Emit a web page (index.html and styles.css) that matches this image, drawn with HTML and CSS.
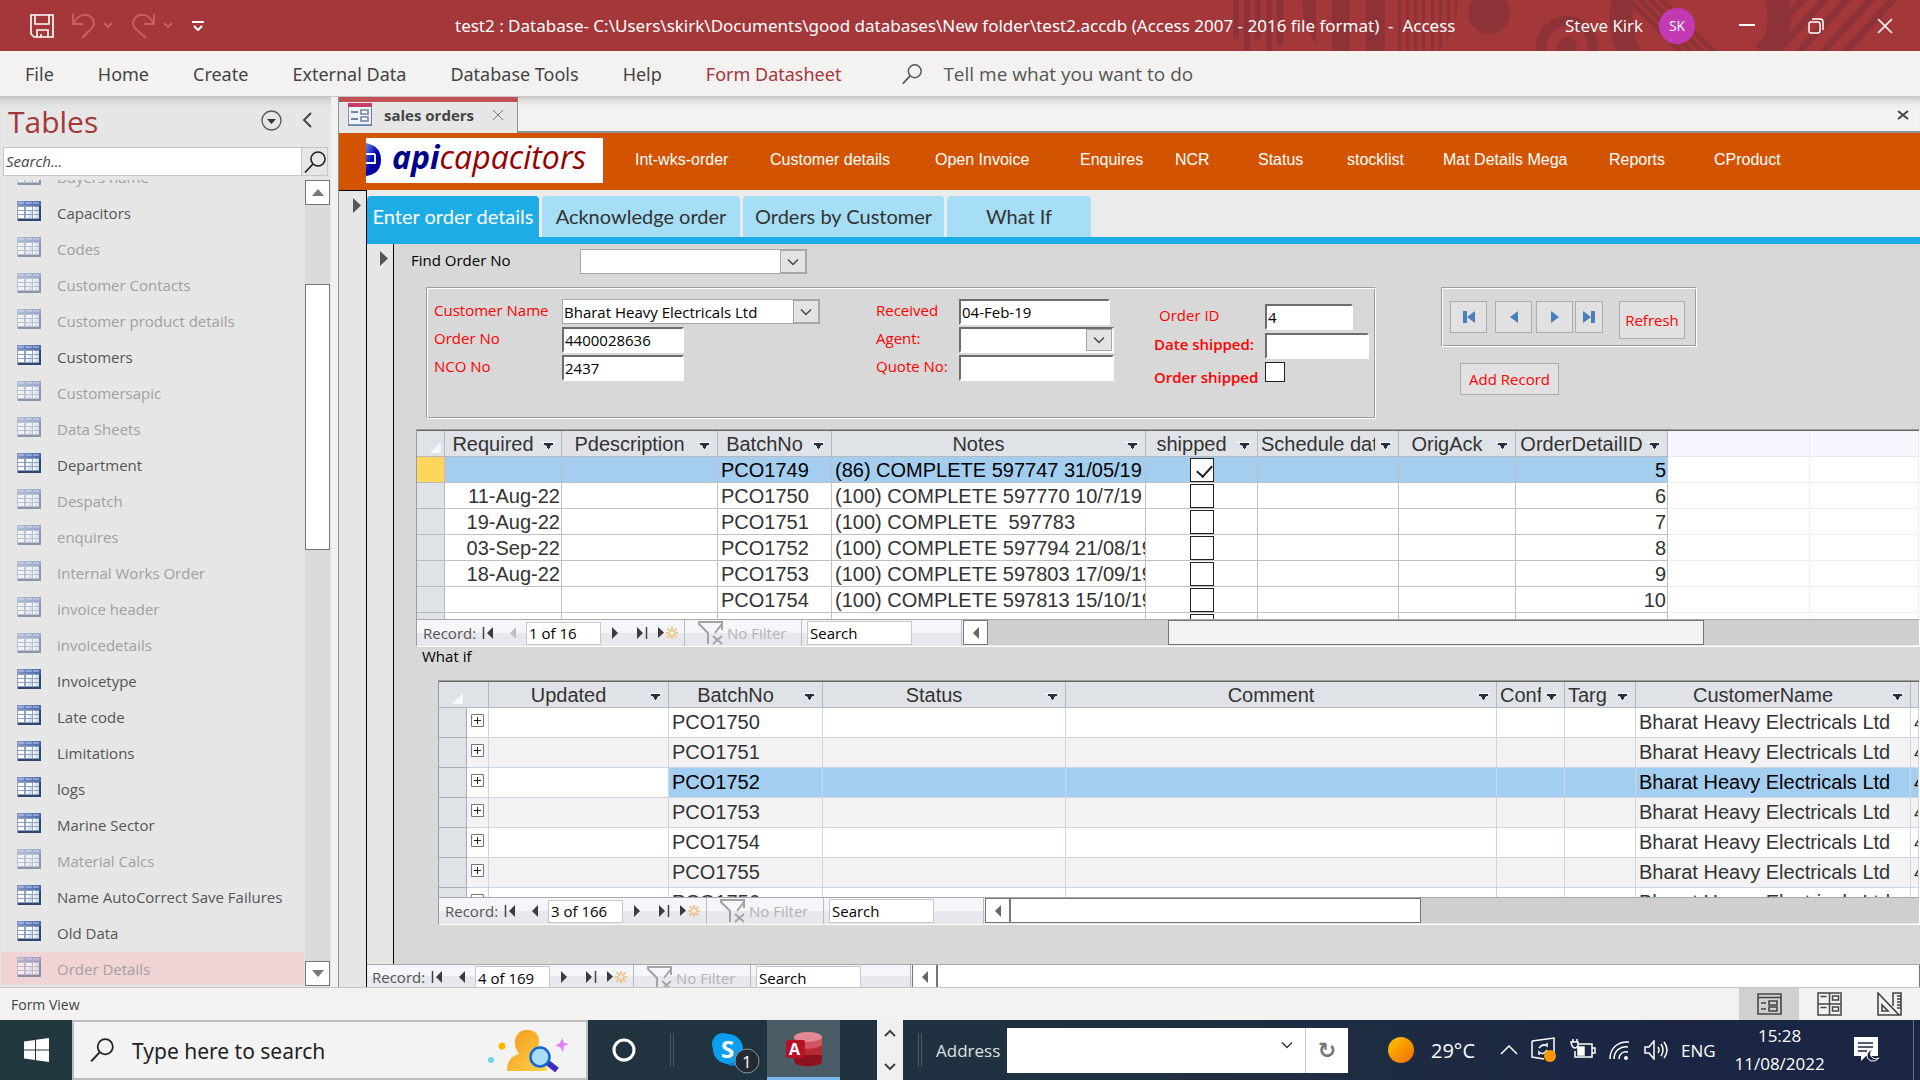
FILE: index.html
```html
<!DOCTYPE html>
<html lang="en">
<head>
<meta charset="utf-8">
<title>test2 : Database - Access</title>
<link rel="stylesheet" href="styles.css">
</head>
<body>
<svg class="defs" aria-hidden="true">
  <defs>
    <linearGradient id="head" x1="0" x2="1"><stop offset="0" stop-color="#7f98c8"/><stop offset="1" stop-color="#4a67a8"/></linearGradient>
    <linearGradient id="sunfill" x1="0" y1="0" x2="1" y2="1"><stop offset="0" stop-color="#ffc400"/><stop offset="1" stop-color="#f06a00"/></linearGradient>
    <linearGradient id="gold" x1="0" x2="1" y2="1"><stop offset="0" stop-color="#f39a1c"/><stop offset="1" stop-color="#ffd24a"/></linearGradient>
    <linearGradient id="globe" x1="0" x2="1" y2="1"><stop offset="0" stop-color="#5b8fe8"/><stop offset=".5" stop-color="#0000b0"/><stop offset="1" stop-color="#00007a"/></linearGradient>
  </defs>
  <symbol id="i-table" viewBox="0 0 24 20">
    <rect width="24" height="20" fill="#8f9fbe"/><rect width="24" height="5" fill="url(#head)"/>
    <path d="M1 2h6M9 2h6M16 2h6" stroke="#c3d0ea"/>
    <path d="M1 6h6v3h-6zM9 6h6v3h-6zM16 6h6v3h-6zM1 10h6v3h-6zM9 10h6v3h-6zM16 10h6v3h-6zM1 14h6v3h-6zM9 14h6v3h-6zM16 14h6v3h-6z" fill="#fff"/>
    <path d="M18 6h4v3h-4zM12 10h3v3h-3zM18 10h4v3h-4zM11 14h4v3h-4zM18 14h4v3h-4z" fill="#d3e0fb"/>
    <path d="M1 19h22V5" fill="none" stroke="#2f486c" stroke-width="2"/>
  </symbol>
  <symbol id="i-search" viewBox="0 0 24 24"><circle cx="15" cy="9" r="7" fill="none" stroke="currentColor" stroke-width="1.6"/><path d="M10 14L2 22.500" stroke="currentColor" stroke-width="1.8"/></symbol>
  <symbol id="i-down" viewBox="0 0 12 8"><path d="M1 1.500l5 5 5-5" fill="none" stroke="currentColor" stroke-width="1.400"/></symbol>
  <symbol id="i-drop" viewBox="0 0 14 8"><path d="M0 .5h14" stroke="#fff"/><path d="M3 1h9v2h-2v1h-1v2h-1v1h-1v-1h-1v-2h-1v-1h-2z" fill="#23303f"/></symbol>
  <symbol id="i-first" viewBox="0 0 12 12"><path d="M1.500 0v12" stroke="#444" stroke-width="1.500"/><path d="M11 0v12L5 6z" fill="#3c3c3c"/></symbol>
  <symbol id="i-prev" viewBox="0 0 12 12"><path d="M9 0v12L3 6z" fill="currentColor"/></symbol>
  <symbol id="i-next" viewBox="0 0 12 12"><path d="M3 0v12L9 6z" fill="currentColor"/></symbol>
  <symbol id="i-last" viewBox="0 0 12 12"><path d="M10.500 0v12" stroke="#444" stroke-width="1.500"/><path d="M1 0v12L7 6z" fill="#3c3c3c"/></symbol>
  <symbol id="i-new" viewBox="0 0 20 12"><path d="M0 0v11l6-5.500z" fill="#3c3c3c"/><path d="M14 0v12M8 6h12M9.500 1.500l9 9M18.500 1.500l-9 9" stroke="#eebd72" stroke-width="1.700"/><circle cx="14" cy="6" r="2" fill="#f3f3f5"/></symbol>
  <symbol id="i-filter" viewBox="0 0 26 24"><path d="M24 9V1H1v2l9 9v11M24 3l-7 9" fill="none" stroke="#a3a3a3" stroke-width="2"/><path d="M15 15l9 8M24 15l-9 8" stroke="#a3a3a3" stroke-width="1.800"/></symbol>
  <symbol id="i-corner" viewBox="0 0 12 12"><path d="M12 0v12H0z" fill="#f4f9fe"/><path d="M12 0v12" stroke="#a9c6e6"/></symbol>
  <symbol id="i-plus" viewBox="0 0 13 13"><path d="M.5 .5h12v12h-12z" fill="#fff" stroke="#777"/><path d="M3 6.500h7M6.500 3v7" stroke="#222"/></symbol>
</svg>

<header class="titlebar">
  <svg class="art" viewBox="0 0 690 51" width="690" height="51" aria-hidden="true">
    <g fill="#8d3337">
      <path d="M3 0h6v39h-6zM14 0h6v50h-6zM25 0h6v39h-6zM36 0h6v51h-6zM47 0h6v45h-6z"/>
      <clipPath id="disc"><circle cx="150" cy="0" r="78"/></clipPath>
      <path clip-path="url(#disc)" d="M70 0h16v51h-16zM102 0h18v51h-18zM136 0h19v51h-19zM168 0h3v51h-3zM176 0h3v51h-3zM184 0h3v51h-3zM192 0h3v51h-3zM201 0h3v51h-3zM209 0h3v51h-3zM217 0h3v51h-3zM225 0h3v51h-3z"/>
      <circle cx="259" cy="13" r="21"/><circle cx="337" cy="47" r="10"/>
    </g>
    <g fill="none" stroke="#8d3337">
      <circle cx="337" cy="47" r="26" stroke-width="10"/>
      <circle cx="470" cy="17" r="79" stroke-width="23"/>
      <path stroke-width="5" d="M402 -8L476 66M413 -8L487 66M424 -8L498 66M391 -8L465 66"/>
      <path stroke-width="7" d="M528 48L578 -6M550 48L600 -6M566 55L622 -6M590 55L646 -6M612 55L668 -6"/>
    </g>
  </svg>
  <div class="quick">
    <button aria-label="Save"><svg width="24" height="24" viewBox="0 0 24 24" fill="none" stroke="#fff" stroke-width="1.600"><path d="M1 1h22v22H4l-3-3zM5 1v9h14V1M7 23v-7h11v7M11 23v-3"/></svg></button>
    <button aria-label="Undo" class="dim"><svg width="42" height="26" viewBox="0 0 42 26" fill="none" stroke="currentColor" stroke-width="1.800"><path d="M1 1v10h10M1 11C6 1 14 0 19 4c5 5 3 10-1 13l-8 8M32 10l4 4 4-4"/></svg></button>
    <button aria-label="Redo" class="dim"><svg width="42" height="26" viewBox="0 0 42 26" fill="none" stroke="currentColor" stroke-width="1.800"><path d="M22 1v10H12M22 11C17 1 9 0 4 4c-5 5-3 10 1 13l9 8M32 10l4 4 4-4"/></svg></button>
    <button aria-label="Customize toolbar"><svg width="12" height="10" viewBox="0 0 12 10" fill="none" stroke="#fff" stroke-width="2"><path d="M0 1h12M2 5l4 4 4-4"/></svg></button>
  </div>
  <h1>test2 : Database- C:\Users\skirk\Documents\good databases\New folder\test2.accdb (Access 2007 - 2016 file format)  -  Access</h1>
  <div class="account"><span>Steve Kirk</span><span class="avatar">SK</span></div>
  <div class="winbtns">
    <button aria-label="Minimize"><svg width="16" height="16" viewBox="0 0 16 16"><path d="M0 7h16" stroke="#fff" stroke-width="2"/></svg></button>
    <button aria-label="Restore"><svg width="16" height="16" viewBox="0 0 16 16" fill="none" stroke="#fff" stroke-width="1.500"><rect x="1" y="4" width="11" height="11" rx="2"/><path d="M4 1h8q3 0 3 3v8"/></svg></button>
    <button aria-label="Close"><svg width="16" height="16" viewBox="0 0 16 16"><path d="M1 1l14 14M15 1L1 15" stroke="#fff" stroke-width="1.600"/></svg></button>
  </div>
</header>

<nav class="ribbon">
  <a href="#">File</a><a href="#">Home</a><a href="#">Create</a><a href="#">External Data</a><a href="#">Database Tools</a><a href="#">Help</a><a href="#" class="on">Form Datasheet</a>
  <label class="tell"><svg width="22" height="24"><use href="#i-search"/></svg><span>Tell me what you want to do</span></label>
</nav>

<div class="work">
  <aside class="side">
    <div class="sidehead"><h2>Tables</h2>
      <button aria-label="Object type"><svg width="21" height="21" viewBox="0 0 21 21"><circle cx="10.500" cy="10.500" r="9.500" fill="none" stroke="#555" stroke-width="1.300"/><path d="M6 9h9l-4.500 5z" fill="#333"/></svg></button>
      <button aria-label="Collapse"><svg width="10" height="16" viewBox="0 0 10 16"><path d="M9 1L2 8l7 7" fill="none" stroke="#444" stroke-width="2"/></svg></button>
    </div>
    <div class="sidesearch"><input type="text" aria-label="Search tables" placeholder="Search..."><button aria-label="Search"><svg width="24" height="24"><use href="#i-search"/></svg></button></div>
    <div class="listwrap">
      <ul class="tables">
        <li class="off"><svg><use href="#i-table"/></svg>Buyers name</li>
        <li><svg><use href="#i-table"/></svg>Capacitors</li>
        <li class="off"><svg><use href="#i-table"/></svg>Codes</li>
        <li class="off"><svg><use href="#i-table"/></svg>Customer Contacts</li>
        <li class="off"><svg><use href="#i-table"/></svg>Customer product details</li>
        <li><svg><use href="#i-table"/></svg>Customers</li>
        <li class="off"><svg><use href="#i-table"/></svg>Customersapic</li>
        <li class="off"><svg><use href="#i-table"/></svg>Data Sheets</li>
        <li><svg><use href="#i-table"/></svg>Department</li>
        <li class="off"><svg><use href="#i-table"/></svg>Despatch</li>
        <li class="off"><svg><use href="#i-table"/></svg>enquires</li>
        <li class="off"><svg><use href="#i-table"/></svg>Internal Works Order</li>
        <li class="off"><svg><use href="#i-table"/></svg>invoice header</li>
        <li class="off"><svg><use href="#i-table"/></svg>invoicedetails</li>
        <li><svg><use href="#i-table"/></svg>Invoicetype</li>
        <li><svg><use href="#i-table"/></svg>Late code</li>
        <li><svg><use href="#i-table"/></svg>Limitations</li>
        <li><svg><use href="#i-table"/></svg>logs</li>
        <li><svg><use href="#i-table"/></svg>Marine Sector</li>
        <li class="off"><svg><use href="#i-table"/></svg>Material Calcs</li>
        <li><svg><use href="#i-table"/></svg>Name AutoCorrect Save Failures</li>
        <li><svg><use href="#i-table"/></svg>Old Data</li>
        <li class="off sel"><svg><use href="#i-table"/></svg>Order Details</li>
      </ul>
      <div class="vscroll">
        <button aria-label="Scroll up"><svg width="12" height="7" viewBox="0 0 12 7"><path d="M0 7h12L6 0z" fill="#777"/></svg></button>
        <div class="vthumb"></div>
        <button aria-label="Scroll down"><svg width="12" height="7" viewBox="0 0 12 7"><path d="M0 0h12L6 7z" fill="#777"/></svg></button>
      </div>
    </div>
  </aside>

  <main class="doc">
    <div class="doctabs">
      <div class="doctab"><svg width="24" height="23" viewBox="0 0 24 23"><rect x=".5" y=".5" width="23" height="22" fill="#eef2fa" stroke="#8792ab"/><rect width="24" height="4" fill="#c6406a"/><path d="M3 9h7M3 16h7" stroke="#7c8397" stroke-width="2"/><path d="M13 7h7v4h-7zM13 14h7v4h-7z" fill="#fff" stroke="#7580a0" stroke-width="1.600"/><path d="M0 22h24V5" fill="none" stroke="#5c79ad" stroke-width="1.500"/></svg><strong>sales orders</strong><button aria-label="Close tab"><svg width="12" height="12" viewBox="0 0 12 12"><path d="M1 1l10 10M11 1L1 11" stroke="#777"/></svg></button></div>
      <button class="closeall" aria-label="Close object"><svg width="12" height="10" viewBox="0 0 12 10"><path d="M1 1l10 8M11 1L1 9" stroke="#444" stroke-width="2"/></svg></button>
    </div>

    <header class="brand">
      <div class="logo">
        <svg width="17" height="36" viewBox="0 0 17 36"><path d="M0 1Q15 4 15 18T0 34z" fill="url(#globe)"/><path d="M0 12h9M0 21h9V12" stroke="#fff" stroke-width="1.800" fill="none"/></svg>
        <span class="api">api</span><span class="cap">capacitors</span>
      </div>
      <nav class="links"><a href="#">Int-wks-order</a><a href="#">Customer details</a><a href="#">Open Invoice</a><a href="#">Enquires</a><a href="#">NCR</a><a href="#">Status</a><a href="#">stocklist</a><a href="#">Mat Details Mega</a><a href="#">Reports</a><a href="#">CProduct</a></nav>
    </header>

    <div class="record">
      <div class="selector"><svg width="8" height="15" viewBox="0 0 8 15"><path d="M0 0l8 7.500L0 15z" fill="#555"/></svg></div>
      <div class="inner">
        <div class="tabs">
          <button class="t1 on">Enter order details</button><button class="t2">Acknowledge order</button><button class="t3">Orders by Customer</button><button class="t4">What If</button>
        </div>
        <div class="subrecord">
          <div class="selector"><svg width="8" height="15" viewBox="0 0 8 15"><path d="M0 0l8 7.500L0 15z" fill="#555"/></svg></div>
          <form class="form">
            <div class="find"><label for="find">Find Order No</label><div class="combo w-find"><select id="find"><option></option></select><span><svg width="12" height="8"><use href="#i-down"/></svg></span></div></div>

            <div class="top">
              <fieldset class="etched details">
                <div class="fields f1">
                  <label for="cust">Customer Name</label><div class="combo w-cust"><select id="cust"><option>Bharat Heavy Electricals Ltd</option></select><span><svg width="12" height="8"><use href="#i-down"/></svg></span></div>
                  <label for="ono">Order No</label><input class="sunk w122" id="ono" type="text" value="4400028636">
                  <label for="nco">NCO No</label><input class="sunk w122" id="nco" type="text" value="2437">
                </div>
                <div class="fields f2">
                  <label for="rec">Received</label><input class="sunk w151" id="rec" type="text" value="04-Feb-19">
                  <label for="agent">Agent:</label><div class="combo sunk w155"><select id="agent"><option></option></select><span><svg width="12" height="8"><use href="#i-down"/></svg></span></div>
                  <label for="quote">Quote No:</label><input class="sunk w155" id="quote" type="text">
                </div>
                <div class="fields f3">
                  <label class="indent" for="oid">Order ID</label><input class="sunk w88" id="oid" type="text" value="4">
                  <label class="heavy" for="dship">Date shipped:</label><input class="sunk w104" id="dship" type="text">
                  <label class="heavy low" for="oship">Order shipped</label><input class="tick" id="oship" type="checkbox">
                </div>
              </fieldset>
              <div class="tools">
                <div class="etched navbox">
                  <button type="button" aria-label="First record"><svg width="12" height="12" viewBox="0 0 12 12"><path d="M0 0h4v12H0zM12 0v12L4 6z" fill="#4a7fb8"/></svg></button>
                  <button type="button" aria-label="Previous record"><svg width="12" height="12" viewBox="0 0 12 12"><path d="M10 0v12L2 6z" fill="#4a7fb8"/></svg></button>
                  <button type="button" aria-label="Next record"><svg width="12" height="12" viewBox="0 0 12 12"><path d="M2 0v12l8-6z" fill="#4a7fb8"/></svg></button>
                  <button type="button" class="narrow" aria-label="Last record"><svg width="12" height="12" viewBox="0 0 12 12"><path d="M12 0h-4v12h4zM0 0v12l8-6z" fill="#4a7fb8"/></svg></button>
                  <button type="button" class="refresh">Refresh</button>
                </div>
                <button type="button" class="add">Add Record</button>
              </div>
            </div>

            <section class="sheet s1">
              <div class="view v1">
                <table class="grid g1">
                  <colgroup><col class="c-sel"><col class="c-req"><col class="c-desc"><col class="c-batch"><col class="c-notes"><col class="c-ship"><col class="c-sched"><col class="c-ack"><col class="c-id"><col class="c-gap"><col></colgroup>
                  <thead><tr><th class="rs"><svg class="corner"><use href="#i-corner"/></svg></th><th><div><span>Required</span><svg><use href="#i-drop"/></svg></div></th><th><div><span>Pdescription</span><svg><use href="#i-drop"/></svg></div></th><th><div><span>BatchNo</span><svg><use href="#i-drop"/></svg></div></th><th><div><span>Notes</span><svg><use href="#i-drop"/></svg></div></th><th><div><span>shipped</span><svg><use href="#i-drop"/></svg></div></th><th><div><span>Schedule dat</span><svg><use href="#i-drop"/></svg></div></th><th><div><span>OrigAck</span><svg><use href="#i-drop"/></svg></div></th><th><div><span>OrderDetailID</span><svg><use href="#i-drop"/></svg></div></th><th class="void"></th><th class="void"></th></tr></thead>
                  <tbody>
                    <tr class="cur"><td class="rs now"></td><td class="r"></td><td></td><td>PCO1749</td><td>(86) COMPLETE 597747 31/05/19</td><td class="c"><input class="tick" type="checkbox" aria-label="shipped" checked></td><td></td><td></td><td class="r">5</td><td class="void"></td><td class="void"></td></tr>
                    <tr><td class="rs"></td><td class="r">11-Aug-22</td><td></td><td>PCO1750</td><td>(100) COMPLETE 597770 10/7/19</td><td class="c"><input class="tick" type="checkbox" aria-label="shipped"></td><td></td><td></td><td class="r">6</td><td class="void"></td><td class="void"></td></tr>
                    <tr><td class="rs"></td><td class="r">19-Aug-22</td><td></td><td>PCO1751</td><td>(100) COMPLETE  597783</td><td class="c"><input class="tick" type="checkbox" aria-label="shipped"></td><td></td><td></td><td class="r">7</td><td class="void"></td><td class="void"></td></tr>
                    <tr><td class="rs"></td><td class="r">03-Sep-22</td><td></td><td>PCO1752</td><td>(100) COMPLETE 597794 21/08/19</td><td class="c"><input class="tick" type="checkbox" aria-label="shipped"></td><td></td><td></td><td class="r">8</td><td class="void"></td><td class="void"></td></tr>
                    <tr><td class="rs"></td><td class="r">18-Aug-22</td><td></td><td>PCO1753</td><td>(100) COMPLETE 597803 17/09/19</td><td class="c"><input class="tick" type="checkbox" aria-label="shipped"></td><td></td><td></td><td class="r">9</td><td class="void"></td><td class="void"></td></tr>
                    <tr><td class="rs"></td><td class="r"></td><td></td><td>PCO1754</td><td>(100) COMPLETE 597813 15/10/19</td><td class="c"><input class="tick" type="checkbox" aria-label="shipped"></td><td></td><td></td><td class="r">10</td><td class="void"></td><td class="void"></td></tr>
                    <tr><td class="rs"></td><td></td><td></td><td></td><td></td><td class="c"><input class="tick" type="checkbox" aria-label="shipped"></td><td></td><td></td><td></td><td class="void"></td><td class="void"></td></tr>
                  </tbody>
                </table>
              </div>
              <div class="recnav">
                <span class="lab">Record:</span><button type="button" aria-label="First"><svg><use href="#i-first"/></svg></button><button type="button" class="faint" aria-label="Previous"><svg><use href="#i-prev"/></svg></button><input class="pos" type="text" aria-label="Record position" value="1 of 16"><button type="button" class="nx" aria-label="Next"><svg><use href="#i-next"/></svg></button><button type="button" aria-label="Last"><svg><use href="#i-last"/></svg></button><button type="button" class="new" aria-label="New"><svg><use href="#i-new"/></svg></button><span class="filter"><svg><use href="#i-filter"/></svg>No Filter</span><input class="find-in" type="text" aria-label="Search records" value="Search"><span class="pad"></span>
                <div class="hscroll mid"><button type="button" aria-label="Scroll left"><svg><use href="#i-prev"/></svg></button><div class="hthumb"></div></div>
              </div>
            </section>

            <p class="whatif">What if</p>

            <section class="sheet s2">
              <div class="view v2">
                <table class="grid g2">
                  <colgroup><col class="c-sel"><col class="c-exp"><col class="c-upd"><col class="c-batch2"><col class="c-stat"><col class="c-com"><col class="c-conf"><col class="c-targ"><col class="c-cname"><col></colgroup>
                  <thead><tr><th class="rs" colspan="2"><svg class="corner"><use href="#i-corner"/></svg></th><th><div><span>Updated</span><svg><use href="#i-drop"/></svg></div></th><th><div><span>BatchNo</span><svg><use href="#i-drop"/></svg></div></th><th><div><span>Status</span><svg><use href="#i-drop"/></svg></div></th><th><div><span>Comment</span><svg><use href="#i-drop"/></svg></div></th><th><div><span>Conf</span><svg><use href="#i-drop"/></svg></div></th><th><div><span>Targ</span><svg><use href="#i-drop"/></svg></div></th><th><div><span>CustomerName</span><svg><use href="#i-drop"/></svg></div></th><th></th></tr></thead>
                  <tbody>
                    <tr><td class="rs"></td><td class="x"><svg><use href="#i-plus"/></svg></td><td></td><td>PCO1750</td><td></td><td></td><td></td><td></td><td>Bharat Heavy Electricals Ltd</td><td>4400028636</td></tr>
                    <tr><td class="rs"></td><td class="x"><svg><use href="#i-plus"/></svg></td><td></td><td>PCO1751</td><td></td><td></td><td></td><td></td><td>Bharat Heavy Electricals Ltd</td><td>4400028636</td></tr>
                    <tr class="cur"><td class="rs"></td><td class="x"><svg><use href="#i-plus"/></svg></td><td class="plain"></td><td>PCO1752</td><td></td><td></td><td></td><td></td><td>Bharat Heavy Electricals Ltd</td><td>4400028636</td></tr>
                    <tr><td class="rs"></td><td class="x"><svg><use href="#i-plus"/></svg></td><td></td><td>PCO1753</td><td></td><td></td><td></td><td></td><td>Bharat Heavy Electricals Ltd</td><td>4400028636</td></tr>
                    <tr><td class="rs"></td><td class="x"><svg><use href="#i-plus"/></svg></td><td></td><td>PCO1754</td><td></td><td></td><td></td><td></td><td>Bharat Heavy Electricals Ltd</td><td>4400028636</td></tr>
                    <tr><td class="rs"></td><td class="x"><svg><use href="#i-plus"/></svg></td><td></td><td>PCO1755</td><td></td><td></td><td></td><td></td><td>Bharat Heavy Electricals Ltd</td><td>4400028636</td></tr>
                    <tr><td class="rs"></td><td class="x"><svg><use href="#i-plus"/></svg></td><td></td><td>PCO1756</td><td></td><td></td><td></td><td></td><td>Bharat Heavy Electricals Ltd</td><td>4400028636</td></tr>
                  </tbody>
                </table>
              </div>
              <div class="recnav">
                <span class="lab">Record:</span><button type="button" aria-label="First"><svg><use href="#i-first"/></svg></button><button type="button" aria-label="Previous"><svg><use href="#i-prev"/></svg></button><input class="pos" type="text" aria-label="Record position" value="3 of 166"><button type="button" class="nx" aria-label="Next"><svg><use href="#i-next"/></svg></button><button type="button" aria-label="Last"><svg><use href="#i-last"/></svg></button><button type="button" class="new" aria-label="New"><svg><use href="#i-new"/></svg></button><span class="filter"><svg><use href="#i-filter"/></svg>No Filter</span><input class="find-in" type="text" aria-label="Search records" value="Search"><span class="pad"></span>
                <div class="hscroll short"><button type="button" aria-label="Scroll left"><svg><use href="#i-prev"/></svg></button><div class="hthumb"></div></div>
              </div>
            </section>
          </form>
        </div>
        <div class="recnav outer">
          <span class="lab">Record:</span><button type="button" aria-label="First"><svg><use href="#i-first"/></svg></button><button type="button" aria-label="Previous"><svg><use href="#i-prev"/></svg></button><input class="pos" type="text" aria-label="Record position" value="4 of 169"><button type="button" class="nx" aria-label="Next"><svg><use href="#i-next"/></svg></button><button type="button" aria-label="Last"><svg><use href="#i-last"/></svg></button><button type="button" class="new" aria-label="New"><svg><use href="#i-new"/></svg></button><span class="filter"><svg><use href="#i-filter"/></svg>No Filter</span><input class="find-in" type="text" aria-label="Search records" value="Search"><span class="pad"></span>
          <div class="hscroll full"><button type="button" aria-label="Scroll left"><svg><use href="#i-prev"/></svg></button><div class="hthumb"></div></div>
        </div>
      </div>
    </div>
  </main>
</div>

<footer class="status"><span>Form View</span>
  <button class="on" aria-label="Form view"><svg width="25" height="22" viewBox="0 0 25 22" fill="none" stroke="#444" stroke-width="1.600"><path d="M1 1h23v20H1zM1 4.500h23M4 10h5M4 16h5M12 8h8v4h-8zM12 14h8v4h-8z"/></svg></button>
  <button aria-label="Layout view"><svg width="25" height="24" viewBox="0 0 25 24" fill="none" stroke="#444" stroke-width="1.500"><path d="M1 1h23v22H1zM12.500 1v22M1 12h23M3.500 4.500h6M3.500 15.500h6M15.500 4h6v4h-6zM15.500 15h6v4h-6z"/></svg></button>
  <button aria-label="Design view"><svg width="25" height="24" viewBox="0 0 25 24" fill="none" stroke="#444" stroke-width="1.600"><path d="M1 1v22h21zM5 13v6h6zM16 14V1h8v22h-3M20 4h4M20 7h4M20 10h4M20 13h4M20 16h4"/></svg></button>
</footer>

<footer class="taskbar">
  <button class="start" aria-label="Start"><svg width="25" height="24" viewBox="0 0 25 24" fill="#fff"><path d="M0 3.500L11 2v9.500H0zM12 1.800L25 0v11.500H12zM0 12.500h11V22L0 20.500zM12 12.500h13V24l-13-1.800z"/></svg></button>
  <label class="search"><svg width="26" height="26"><use href="#i-search"/></svg><span>Type here to search</span>
    <svg class="person" width="82" height="44" viewBox="0 0 82 44"><circle cx="15" cy="18" r="3.500" fill="#ffb400"/><circle cx="4" cy="32" r="3" fill="#6ad4e8"/><path d="M20 43q0-14 12-17c-10-14 0-26 10-24 14 2 11 16 6 24q12 3 12 17z" fill="url(#gold)"/><path d="M61 35l9 7" stroke="#3a2fc0" stroke-width="6"/><circle cx="53" cy="29" r="9.500" fill="#a8ddf8" stroke="#1565d8" stroke-width="2.500"/><path d="M75 10l2 5 5 1-5 2-1 6-3-5-5-1 5-3z" fill="#e080f8"/></svg>
  </label>
  <button class="cortana" aria-label="Cortana"><svg width="24" height="24" viewBox="0 0 24 24"><circle cx="12" cy="12" r="10" fill="none" stroke="#fff" stroke-width="3"/></svg></button>
  <span class="bar"></span>
  <button class="skype" aria-label="Skype"><svg width="50" height="48" viewBox="0 0 50 48"><circle cx="12" cy="18" r="11" fill="#0a9be8"/><circle cx="22" cy="29" r="11" fill="#0877d6"/><circle cx="17" cy="23" r="15" fill="#0ba0ef"/><circle cx="36" cy="35" r="12" fill="#222b33" stroke="#8c959c"/></svg><b>S</b><i>1</i></button>
  <button class="access" aria-label="Access"><svg width="36" height="36" viewBox="0 0 36 36"><path d="M8 6v24c0 7 28 7 28 0V6z" fill="#b52a33"/><path d="M8 24v6c0 7 28 7 28 0v-6z" fill="#8c1220"/><path d="M8 6v8c6 5 22 5 28 0V6z" fill="#d05560"/><ellipse cx="22" cy="6" rx="14" ry="5" fill="#e38892"/><rect y="9" width="19" height="18" rx="2" fill="#b51226"/></svg><b>A</b></button>
  <span class="updown"><svg width="12" height="44" viewBox="0 0 12 44" fill="none" stroke="#444" stroke-width="2"><path d="M1 8l5-5 5 5M1 36l5 5 5-5"/></svg></span>
  <span class="bar second"></span>
  <label class="addr" for="addr">Address</label>
  <div class="addrbox"><input id="addr" type="text"><svg class="chev" width="12" height="8"><use href="#i-down"/></svg><button aria-label="Reload">↻</button></div>
  <div class="tray">
    <svg width="26" height="26" viewBox="0 0 26 26"><circle cx="13" cy="13" r="13" fill="url(#sunfill)"/></svg>
    <span class="temp">29°C</span>
    <svg class="up" width="18" height="10" viewBox="0 0 18 10"><path d="M1 9l8-8 8 8" fill="none" stroke="#fff" stroke-width="1.500"/></svg>
    <svg width="26" height="26" viewBox="0 0 26 26" fill="none" stroke="#fff" stroke-width="1.500"><path d="M1 4l22-3v15M1 4v16l12 2M8 11q4-5 8-2v-3M16 13q-4 6-8 2v3"/><circle cx="19" cy="19" r="6" fill="#ff9800" stroke="none"/></svg>
    <svg width="26" height="22" viewBox="0 0 26 22" fill="none" stroke="#fff" stroke-width="1.500"><path d="M8 5h14v13H5v-6M22 9h3v5h-3M1 3h7v4q-3 4-6 0zM3 0v3M7 0v3"/><path d="M8 8h6v8H8z" fill="#fff"/></svg>
    <svg width="22" height="22" viewBox="0 0 22 22" fill="none" stroke="#fff" stroke-width="1.500"><path d="M1 20C1 9 9 2 20 3M5 20c0-8 6-13 14-12M10 20c0-5 4-8 9-7"/><circle cx="17" cy="19" r="2" fill="#fff" stroke="none"/></svg>
    <svg width="24" height="20" viewBox="0 0 24 20" fill="none" stroke="#fff" stroke-width="1.500"><path d="M1 7h4l5-6v18l-5-6H1zM14 7q2 3 0 6M17 4q4 6 0 12M20 2q6 8 0 16"/></svg>
    <span class="lang">ENG</span>
    <div class="clock"><span>15:28</span><span>11/08/2022</span></div>
    <svg class="note" width="26" height="26" viewBox="0 0 26 26"><path d="M0 0h24v19H12l-5 5v-5H0z" fill="#fff"/><path d="M4 6h15M4 10h15M4 14h9" stroke="#1d2a40" stroke-width="1.500"/><path d="M19 12q-5 6 0 9 3 2 6 0-3 4-8 3-6-3-3-9z" fill="#1d2a40" stroke="#fff"/></svg>
  </div>
  <span class="edge"></span>
</footer>
</body>
</html>
```
FILE: styles.css
```css
:root {
  --ui: "Open Sans", "Noto Sans", sans-serif;
  --wide: "Noto Sans", "Open Sans", sans-serif;
  --data: "Liberation Sans", Arial, sans-serif;
  --head: #dfe3e8;
  --pick: #a4cef0;
}
* { box-sizing: border-box; }
html, body { height: 100%; }
body {
  margin: 0;
  display: flex;
  flex-direction: column;
  overflow: hidden;
  font-family: var(--ui);
  font-size: 16px;
  color: #444;
  background: #f3f2f1;
}
button, input, select { font: inherit; color: inherit; margin: 0; padding: 0; border: 0; border-radius: 0; background: none; }
button { display: flex; align-items: center; justify-content: center; }
a { color: inherit; text-decoration: none; }
svg { flex: none; display: block; }
.defs { position: absolute; width: 0; height: 0; }

/* title bar */
.titlebar { position: relative; flex: none; display: flex; align-items: center; height: 51px; background: #a4373a; color: #fff; }
.titlebar > * { position: relative; }
.titlebar .art { position: absolute; right: 0; top: 0; }
.quick { display: flex; align-items: center; gap: 18px; width: 455px; padding-left: 30px; }
.quick .dim { color: #cc6064; }
.titlebar h1 { flex: 1; margin: 0; font: 17px/26px var(--wide); white-space: pre; }
.account { display: flex; align-items: center; gap: 16px; font-size: 17px; margin-right: 44px; }
.avatar { width: 36px; height: 36px; border-radius: 50%; background: #c239b3; font-size: 14px; line-height: 36px; text-align: center; }
.winbtns { display: flex; gap: 53px; margin-right: 27px; }

/* ribbon */
.ribbon { flex: none; display: flex; align-items: center; gap: 44px; height: 46px; padding-left: 25px; font: 18px/26px var(--wide); border-bottom: 1px solid #c8c6c4; white-space: nowrap; }
.ribbon .on { color: #a4373a; }
.tell { display: flex; align-items: center; gap: 20px; margin-left: 16px; color: #555; font: 19px/26px var(--ui); }

/* working area */
.work { flex: 1; display: flex; min-height: 0; }
.side { flex: none; display: flex; flex-direction: column; width: 339px; background: #e6e6e6; border-right: 1px solid #8c939b; box-shadow: inset -7px 0 0 #f0f1f3, inset 0 10px 10px -8px #bbb; }
.sidehead { display: flex; align-items: center; height: 50px; padding: 0 26px 2px 8px; }
.sidehead h2 { flex: 1; margin: 0; font-size: 30px; font-weight: 400; color: #a4373a; line-height: 40px; padding-top: 2px; }
.sidehead button { margin-bottom: 2px; }
.sidehead button + button { margin-left: 20px; }
.sidesearch { display: flex; height: 29px; margin: 0 10px 0 3px; border: 1px solid #c6c6c6; flex: none; }
.sidesearch input { flex: 1; min-width: 0; padding: 0 0 2px 2px; background: #fff; font-size: 15px; font-style: italic; }
.sidesearch input::placeholder { color: #444; opacity: 1; }
.sidesearch button { width: 26px; border-left: 1px solid #c6c6c6; color: #222; }
.listwrap { flex: 1; display: flex; min-height: 0; margin: 4px 8px 1px 0; }
.tables { flex: 1; display: flex; flex-direction: column; justify-content: flex-end; overflow: hidden; margin: 0 1px 0 0; padding: 0; list-style: none; }
.tables li { flex: none; display: flex; align-items: center; gap: 16px; height: 36px; padding-left: 17px; font-size: 15px; color: #555; background-clip: padding-box; }
.tables li svg { width: 24px; height: 20px; margin-bottom: 4px; }
.tables .off { color: #a0a0a0; }
.tables .off svg { opacity: .5; }
.tables .sel { height: 35px; border: 1px solid transparent; border-right: 0; padding-left: 16px; background-color: #f0d3d5; }
.vscroll { display: flex; flex-direction: column; width: 25px; background: #dadada; }
.vscroll button { flex: none; height: 25px; border: 1px solid #767676; background: #fff; }
.vthumb { flex: 0 0 33%; margin: 79px 0 auto; border: 1px solid #767676; background: #fff; }

.doc { flex: 1; min-width: 0; display: flex; flex-direction: column; }
.doctabs { flex: none; display: flex; justify-content: space-between; align-items: flex-end; height: 36px; border-bottom: 2px solid #8c939b; box-shadow: inset 0 10px 10px -8px #bbb; }
.doctab { display: flex; align-items: center; height: 36px; margin-bottom: -2px; width: 179px; padding: 0 13px 6px 9px; background: #e6e6e6; border-top: 5px solid #c05054; border-right: 1px solid #8c939b; font-size: 15px; }
.doctab strong { flex: 1; padding-left: 12px; font-weight: 700; white-space: nowrap; }
.closeall { margin: 0 11px 11px 0; }

.brand { flex: none; display: flex; align-items: center; height: 57px; padding: 0 0 3px 27px; background: #d35400; color: #fff; }
.logo { display: flex; align-items: center; width: 237px; height: 45px; background: #fff; font: italic 700 32px/40px "Open Sans", sans-serif; overflow: hidden; }
.logo .api { margin-left: 9px; color: #00008b; }
.logo .cap { color: #960000; font-weight: 500; }
.logo .api, .logo .cap { padding-bottom: 6px; }
.links { display: grid; grid-template-columns: 135px 165px 145px 95px 83px 89px 96px 166px 105px auto; margin-left: 32px; font: 16px/20px var(--data); white-space: nowrap; }

.record { flex: 1; display: flex; min-height: 0; }
.selector { flex: none; width: 28px; padding: 7px 0 0 14px; background: #e6e6e6; border-right: 1px solid #000; }
.record > .selector { border-top: 1px solid #000; }
.inner { flex: 1; min-width: 0; display: flex; flex-direction: column; }
.tabs { flex: none; display: flex; align-items: flex-start; gap: 3px; height: 54px; padding-top: 6px; background: #ebebeb; border-bottom: 7px solid #1dace6; }
.tabs button { height: 41px; padding-bottom: 2px; border-radius: 4px 4px 0 0; background: #a5def5; color: #333; font: 20px Lato, sans-serif; }
.tabs .on { height: 48px; padding-bottom: 8px; background: #1dace6; color: #fff; }
.t1 { width: 172px; }
.t2 { width: 198px; }
.t3 { width: 201px; }
.t4 { width: 144px; }
.subrecord { flex: 1; display: flex; min-height: 0; }
.subrecord .selector { width: 27px; padding-left: 13px; }

/* form */
.form { flex: 1; min-width: 0; padding-top: 5px; background: #d8d8d8; overflow: hidden; font: 15px/22px var(--ui); color: #000; }
.find { display: grid; grid-template-columns: 169px auto; justify-content: start; padding-left: 17px; }
.combo { display: flex; height: 25px; border: 1px solid #a6a6ab; background: #fff; }
.combo select { flex: 1; min-width: 0; appearance: none; padding-left: 1px; color: #000; }
.combo span { flex: none; display: flex; align-items: center; justify-content: center; width: 26px; border: 1px solid #a6a6ab; background: #e3e3e3; color: #444; pointer-events: none; }
.w-find { width: 227px; }
.w-cust { width: 258px; }
.top { display: flex; align-items: flex-start; margin: 13px 0 10px 32px; }
.etched { margin: 0; padding: 0; border: 1px solid; border-color: #9d9d9d #fff #fff #9d9d9d; box-shadow: inset 1px 1px 0 #fff, inset -1px -1px 0 #9d9d9d; }
.details { display: flex; width: 950px; height: 132px; padding: 11px 0 0 7px; color: #f00; }
.fields { display: grid; align-content: start; align-items: start; grid-auto-rows: 26px; row-gap: 2px; white-space: nowrap; }
.fields input { color: #000; }
.f1 { width: 442px; grid-template-columns: 128px auto; justify-content: start; }
.f2 { width: 278px; grid-template-columns: 83px auto; justify-content: start; }
.f3 { grid-template-columns: 111px auto; justify-content: start; row-gap: 3px; padding-top: 5px; }
.sunk { height: 26px; padding-left: 1px; border: 2px solid; border-color: #6d6d6d #fff #fff #6d6d6d; background: #fff; }
.w88 { width: 88px; }
.w104 { width: 104px; }
.w122 { width: 122px; }
.w151 { width: 151px; }
.w155 { width: 155px; }
.indent { padding-left: 5px; }
.heavy { font-weight: 600; }
.low { align-self: end; }
.tick { appearance: none; width: 20px; height: 20px; border: 1px solid #222; background: #fff; }
.tick:checked::after { content: ""; display: block; width: 7px; height: 13px; margin: 2px 0 0 8px; border: solid #222; border-width: 0 2px 2px 0; transform: rotate(42deg); }
.tools { margin-left: 65px; }
.tools button { height: 32px; border: 1px solid #adadad; background: #e1e1e1; color: #f00; width: 37px; }
.navbox { display: grid; grid-template-columns: 45px 41px 39px 44px auto; width: 256px; height: 60px; padding: 13px 0 0 8px; }
.tools .narrow { width: 28px; }
.tools .refresh { width: 66px; height: 38px; }
.tools .add { width: 99px; margin: 16px 0 0 19px; }
.whatif { margin: 0 0 12px 28px; height: 21px; line-height: 18px; }

/* datasheets */
.sheet { border: 1px solid; border-color: #9d9d9d #fff #fff #9d9d9d; }
.s1 { margin-left: 22px; }
.s2 { margin-left: 44px; }
.view { overflow: hidden; border-top: 1px solid #666; background: #fff; }
.v1 { height: 189px; }
.v2 { height: 216px; }
.grid { width: 100%; table-layout: fixed; border-collapse: separate; border-spacing: 0; font: 20px/24px var(--data); color: #333; }
.grid th, .grid td { height: 26px; padding: 0 2px 0 3px; border: solid #c0c0c0; border-width: 0 1px 1px 0; overflow: hidden; white-space: pre; text-align: left; font-weight: 400; }
.grid th { background: var(--head); border-color: #b6bac0; padding: 0 6px 0 3px; }
.grid th div { display: flex; align-items: center; }
.grid th span { flex: 1; overflow: hidden; margin-right: 3px; text-align: center; }
.grid th div svg { width: 14px; height: 8px; margin-top: 4px; }
.g1 th:nth-child(7) span, .g2 th:nth-child(6) span, .g2 th:nth-child(7) span { text-align: left; }
.grid .rs { background: var(--head); border-color: #b6bac0; }
.corner { width: 12px; height: 12px; margin: 6px 0 0 10px; }
.grid td.r { text-align: right; padding-right: 1px; }
.grid td.c { padding: 0; }
.g1 td .tick { display: block; width: 24px; height: 24px; margin: 0 auto; }
.g1 td .tick:checked::after { margin: 3px 0 0 9px; }
.grid .cur td { background: var(--pick); color: #000; }
.grid .cur .now { background: #ffd65c; border-right-color: #f7a8a8; }
.grid .cur .void, .grid td.void { background: #fff; border-color: #eee; }
.grid th.void { background: #f7f8ff; border-color: #eaeaee; }
.grid.g2 td { height: 30px; padding-bottom: 2px; border-color: #ccd6e6; }
.g2 tbody tr:nth-child(even) td { background: #f3f3f3; }
.g2 tbody tr td.rs, .g2 tbody tr:nth-child(even) td.rs { background: var(--head); border-color: #a9aeb6; }
.grid.g2 td.x { padding: 0 0 0 4px; }
.g2 .x svg { width: 13px; height: 13px; margin-bottom: 4px; }
.grid .cur td.x, .grid .cur td.plain { background: #fff; }
.c-sel { width: 28px; }
.c-req, .c-ack { width: 117px; }
.c-desc { width: 156px; }
.c-batch { width: 114px; }
.c-notes { width: 314px; }
.c-ship { width: 112px; }
.c-sched { width: 141px; }
.c-id { width: 152px; }
.c-gap { width: 142px; }
.c-exp { width: 22px; }
.c-upd { width: 180px; }
.c-batch2 { width: 154px; }
.c-stat { width: 243px; }
.c-com { width: 431px; }
.c-conf { width: 68px; }
.c-targ { width: 71px; }
.c-cname { width: 275px; }

/* record navigation strip */
.recnav { display: flex; align-items: center; height: 27px; border-top: 1px solid #a4a8b2; background: linear-gradient(#f5f6f9 50%, #e6e8ee 50%); font: 15px/20px var(--ui); color: #555; white-space: nowrap; overflow: hidden; }
.recnav .lab { width: 65px; padding-left: 6px; }
.recnav button { width: 12px; color: #3c3c3c; }
.recnav button svg { width: 12px; height: 12px; }
.recnav button + button { margin-left: 13px; }
.recnav .faint { color: #bdbdbd; }
.recnav .pos { width: 75px; height: 23px; margin-left: 7px; padding-left: 2px; border: 1px solid #c8c8cc; background: #fff; color: #000; }
.recnav button.nx { margin-left: 8px; }
.recnav .nx + button { margin-left: 15px; }
.recnav button.new { width: 20px; margin-left: 10px; }
.recnav .new svg { width: 20px; }
.filter { display: flex; align-items: center; align-self: stretch; gap: 3px; width: 118px; margin-left: 6px; padding-left: 13px; border: solid #b8bac4; border-width: 0 1px; color: #b4b4b4; }
.filter svg { width: 26px; height: 24px; }
.find-in { width: 105px; height: 24px; margin-left: 5px; padding-left: 2px; border: 1px solid #c8c8cc; background: #fff; color: #000; }
.pad { width: 50px; align-self: stretch; border-right: 1px solid #b8bac4; }
.hscroll { flex: 1; display: flex; height: 25px; margin-left: 1px; align-self: flex-start; background: #cfcfcf; }
.recnav .hscroll button { width: 25px; border: 1px solid #767676; background: #fff; color: #666; }
.hthumb { border: 1px solid #767676; background: #fff; }
.mid .hthumb { width: 536px; margin-left: 180px; background: #f2f2f2; }
.short .hthumb { width: 411px; }
.full .hthumb { flex: 1; }
.outer { flex: none; height: 23px; align-items: flex-start; }
.outer .lab, .outer button, .outer input { margin-top: 1px; flex: none; }
.outer .lab { width: 64px; padding-left: 5px; margin-top: 2px; }
.outer > button { height: 22px; }
.outer .filter { flex: none; height: 25px; }
.outer .hscroll { margin-top: -1px; }
.outer .hscroll button { margin-top: 0; }

/* status bar */
.status { flex: none; display: flex; align-items: center; height: 33px; padding-right: 1px; border-top: 1px solid #c8c6c4; font-size: 14px; background: #f3f2f1; }
.status span { flex: 1; padding-left: 11px; }
.status button { width: 60px; height: 100%; }
.status .on { background: #d2d0ce; }

/* taskbar */
.taskbar { flex: none; display: flex; align-items: center; height: 60px; background: linear-gradient(90deg, #22383f, #1f3040 60%, #1b2544 90%); color: #fff; }
.start { width: 72px; height: 60px; }
.search { display: flex; align-items: center; gap: 17px; width: 516px; height: 60px; padding: 0 17px 0 15px; background: #f3f3f3; border: 2px solid #bdbdbd; color: #222; font: 21px/30px var(--wide); }
.search span { flex: 1; padding-top: 2px; }
.cortana { width: 72px; height: 60px; }
.bar { width: 4px; height: 34px; margin-left: 10px; border: solid #4a5c63; border-width: 0 1px; }
.skype { position: relative; margin-left: 37px; }
.skype b, .skype i, .access b { position: absolute; font-style: normal; line-height: 24px; }
.skype b { left: 10px; top: 11px; font-size: 24px; }
.skype i { left: 31px; top: 24px; font-size: 17px; }
.access { position: relative; width: 73px; height: 60px; margin-left: 6px; background: #4a5c66; border-bottom: 3px solid #76b9ed; }
.access b { left: 22px; top: 17px; font-size: 16px; }
.updown { display: flex; align-items: center; justify-content: center; width: 26px; height: 60px; margin-left: 37px; background: #f0f0f0; }
.second { margin-left: 15px; }
.addr { margin-left: 14px; width: 71px; font-size: 17px; color: #dde2e6; }
.addrbox { position: relative; display: flex; flex: none; width: 341px; height: 45px; background: #fff; color: #555; }
.addrbox input { flex: 1; min-width: 0; padding-left: 8px; }
.chev { margin: 13px 12px 0 0; color: #333; }
.addrbox button { width: 43px; border-left: 1px solid #ccc; font: 700 22px "DejaVu Sans", sans-serif; color: #777; }
.tray { flex: 1; display: flex; align-items: center; gap: 13px; padding-left: 40px; white-space: nowrap; }
.temp { width: 60px; padding-left: 4px; font-size: 20px; }
.lang { font-size: 17px; }
.clock { display: flex; flex-direction: column; align-items: center; margin-left: 4px; width: 94px; font-size: 17px; line-height: 28px; }
.note { margin-left: 14px; }
.edge { width: 1px; height: 60px; margin-right: 6px; background: #6b7486; }
```
